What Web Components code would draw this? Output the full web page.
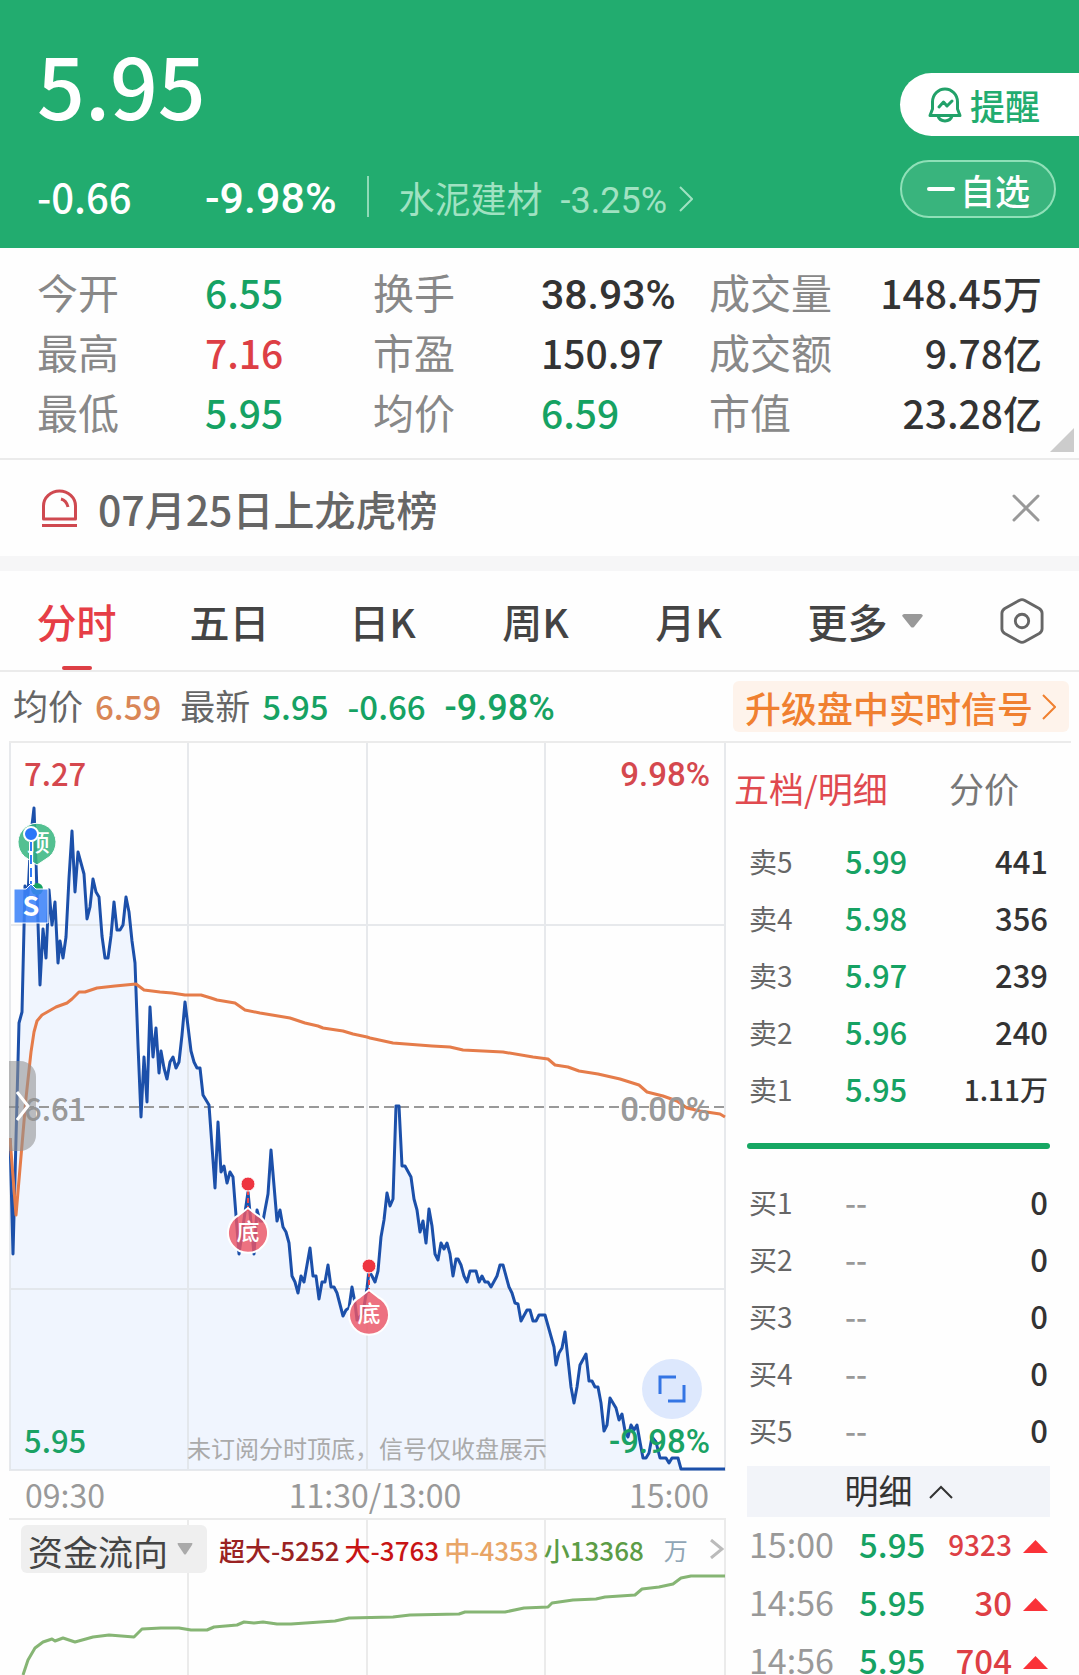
<!DOCTYPE html>
<html lang="zh-CN">
<head>
<meta charset="utf-8">
<meta name="viewport" content="width=device-width, initial-scale=1">
<title>分时行情</title>
<style>
    html, body {
        margin: 0;
        height: 100%;
    }
    body {
        overflow: hidden;
        background: #fefefe;
        color: #333;
        font-family: "Noto Sans CJK SC", "Noto Sans", sans-serif;
        --up: #dd3f45;
        --down: #16a263;
        --line: #ebebeb;
        --muted: #888;
        --pct-font: Roboto, "Noto Sans CJK SC", sans-serif;
    }
</style>
</head>
<body>
<quote-page></quote-page>

<script>
class BaseComponent extends HTMLElement {
    constructor() {
        super();
        this.attachShadow({ mode: 'open' });
        const template = document.createElement('template');
        template.innerHTML = `
        <style>
            * { box-sizing: border-box; }
            button, select {
                margin: 0;
                padding: 0;
                border: 0;
                background: none;
                color: inherit;
                font: inherit;
                appearance: none;
                cursor: pointer;
            }
            svg { display: block; flex: none; fill: none; }
            .up { color: var(--up); }
            .down { color: var(--down); }
            .pct { font-family: var(--pct-font); font-weight: 500; }
        </style>
        ${this.template()}`;
        this.shadowRoot.appendChild(template.content.cloneNode(true));
    }

    template() {
        return '';
    }
}

class QuoteHeader extends BaseComponent {
    template() {
        return `
        <style>
            :host {
                display: flex;
                justify-content: space-between;
                background: #22ac6f;
                color: #fff;
            }
            .left { padding: 34px 0 28px 37px; }
            .price { font-size: 84px; line-height: 100px; font-weight: 500; }
            .row {
                display: flex;
                align-items: baseline;
                height: 48px;
                margin-top: 38px;
                font-size: 40px;
                line-height: 48px;
                font-weight: 500;
            }
            .change { width: 168px; }
            .percent { font-size: 43px; }
            .sector {
                display: flex;
                align-items: baseline;
                gap: 18px;
                margin-left: 30px;
                padding-left: 32px;
                position: relative;
                color: #a0e2c2;
                font-size: 36px;
                font-weight: 400;
                text-decoration: none;
            }
            .sector::before {
                content: "";
                position: absolute;
                left: 0;
                top: 3px;
                width: 2px;
                height: 41px;
                background: #8fdab7;
            }
            .sector .pct { font-weight: 400; }
            .sector svg { margin-left: -6px; align-self: center; }
            .right {
                display: flex;
                flex-direction: column;
                gap: 24px;
                width: 179px;
                padding-top: 73px;
            }
            button { display: flex; align-items: center; }
            .remind {
                height: 63px;
                gap: 8px;
                padding: 0 0 0 28px;
                border-radius: 32px 0 0 32px;
                background: #fff;
                color: #22ac6f;
                font-size: 35px;
                font-weight: 500;
            }
            .fav {
                width: 156px;
                height: 58px;
                gap: 5px;
                padding: 0 0 0 25px;
                border: 2px solid #8fe0b8;
                border-radius: 29px;
                background: #39b47d;
                font-size: 35px;
                font-weight: 500;
            }
        </style>
        <div class="left">
            <div class="price">5.95</div>
            <div class="row">
                <span class="change">-0.66</span>
                <span class="percent pct">-9.98%</span>
                <a class="sector" href="#sector">
                    <span>水泥建材</span>
                    <span class="pct">-3.25%</span>
                    <svg width="14" height="26" viewBox="0 0 14 26" stroke="#a0e2c2" stroke-width="2"><path d="M1 1l12 12L1 25"/></svg>
                </a>
            </div>
        </div>
        <div class="right">
            <button class="remind" type="button">
                <svg width="34" height="36" viewBox="0 0 34 36" stroke="#22a169" stroke-width="3" stroke-linecap="round" stroke-linejoin="round">
                    <path d="M2 28.500l2.500-6.500V15a12.500 13 0 0 1 25 0v7l2.500 6.500z"/>
                    <path d="M10 29c2 6.500 12 6.500 14 0"/>
                    <path d="M11 20l4.500-5 3.500 4 5-5"/>
                </svg>
                <span>提醒</span>
            </button>
            <button class="fav" type="button">
                <svg width="28" height="4" viewBox="0 0 28 4"><path d="M2 2h24" stroke="#fff" stroke-width="4" stroke-linecap="round"/></svg>
                <span>自选</span>
            </button>
        </div>`;
    }
}

class StatGrid extends BaseComponent {
    template() {
        const stats = [
            ['今开', '6.55', 'down'], ['换手', '38.93%', 'pct'], ['成交量', '148.45万', ''],
            ['最高', '7.16', 'up'], ['市盈', '150.97', ''], ['成交额', '9.78亿', ''],
            ['最低', '5.95', 'down'], ['均价', '6.59', 'down'], ['市值', '23.28亿', ''],
        ];
        return `
        <style>
            :host {
                display: block;
                position: relative;
                padding: 13px 37px 17px;
                border-bottom: 2px solid var(--line);
            }
            dl {
                display: grid;
                grid-template-columns: 168fr 168fr 168fr 168fr 126fr 207fr;
                grid-auto-rows: 60px;
                align-items: baseline;
                margin: 0;
                font-size: 41px;
                line-height: 60px;
                white-space: nowrap;
            }
            .item { display: contents; }
            dt { color: var(--muted); }
            dd { margin: 0; font-size: 39px; font-weight: 500; }
            .pct { font-size: 41px; }
            .item:nth-child(3n) dd { text-align: right; }
            .corner { position: absolute; right: 5px; bottom: 6px; }
        </style>
        <dl>
            ${stats.map(([name, value, cls]) => `<div class="item"><dt>${name}</dt><dd class="${cls}">${value}</dd></div>`).join('')}
        </dl>
        <svg class="corner" width="24" height="24" viewBox="0 0 24 24"><path d="M24 0v24H0z" fill="#ccc"/></svg>`;
    }
}

class NoticeBar extends BaseComponent {
    template() {
        return `
        <style>
            :host {
                display: flex;
                align-items: center;
                height: 111px;
                padding: 0 38px 0 41px;
                border-bottom: 15px solid #f6f6f7;
                color: #666;
                font-size: 41px;
                line-height: 60px;
                box-sizing: border-box;
            }
            .text { flex: 1; margin: 0 0 0 20px; font-weight: 500; }
            button { padding: 1px; }
        </style>
        <svg width="37" height="38" viewBox="0 0 37 38" stroke="#cf4950" stroke-width="3">
            <path d="M2.500 30V17a16 15 0 0 1 32 0v13z" stroke-linejoin="round"/>
            <path d="M1 36.500h35"/>
            <path d="M20 10c4 1 6 4 7 8"/>
        </svg>
        <p class="text"><slot></slot></p>
        <button type="button" aria-label="关闭">
            <svg width="28" height="28" viewBox="0 0 28 28" stroke="#999" stroke-width="3" stroke-linecap="round"><path d="M2 2l24 24M26 2L2 26"/></svg>
        </button>`;
    }
}

class PeriodTabs extends BaseComponent {
    template() {
        return `
        <style>
            :host {
                display: grid;
                grid-template-columns: repeat(5, 153fr) 200fr 114fr;
                height: 101px;
                border-bottom: 2px solid var(--line);
                color: #444;
                font-size: 40px;
                font-weight: 500;
                box-sizing: border-box;
            }
            button { display: flex; align-items: center; justify-content: center; position: relative; }
            .active { color: #e63e46; }
            .active::after {
                content: "";
                position: absolute;
                bottom: 0;
                left: 50%;
                width: 30px;
                height: 4px;
                margin-left: -15px;
                border-radius: 2px;
                background: #dd3f45;
            }
            label { display: flex; align-items: center; justify-content: center; gap: 14px; }
            select { height: 60px; }
        </style>
        <button class="active" type="button">分时</button>
        <button type="button">五日</button>
        <button type="button">日K</button>
        <button type="button">周K</button>
        <button type="button">月K</button>
        <label>
            <select aria-label="更多周期"><option>更多</option></select>
            <svg width="21" height="14" viewBox="0 0 21 14"><path d="M2 0h17q3 1 1 3l-8 10q-1.500 1-3 0L1 3q-2-2 1-3z" fill="#999"/></svg>
        </label>
        <button type="button" aria-label="设置">
            <svg width="44" height="48" viewBox="0 0 46 50" stroke="#666" stroke-width="3" stroke-linejoin="round">
                <path d="M20 3.500q3-1.600 6 0l15 8.500q3 2 3 5v16q0 3-3 5l-15 8.500q-3 1.600-6 0L5 38q-3-2-3-5V17q0-3 3-5z"/>
                <circle cx="23" cy="25" r="7"/>
            </svg>
        </button>`;
    }
}

class PriceSummary extends BaseComponent {
    template() {
        return `
        <style>
            :host {
                display: flex;
                align-items: center;
                justify-content: space-between;
                height: 69px;
                padding: 0 10px 0 13px;
                font-size: 33px;
                white-space: nowrap;
                box-sizing: border-box;
            }
            .values { display: flex; align-items: baseline; font-weight: 500; line-height: 50px; }
            .name { margin-right: 12px; color: #666; font-size: 35px; font-weight: 400; }
            .avg { margin-right: 19px; color: #d98656; }
            .down { margin-right: 19px; }
            .pct { font-size: 36px; }
            button {
                display: flex;
                align-items: center;
                gap: 9px;
                height: 51px;
                padding: 0 13px 0 12px;
                border-radius: 6px;
                background: #fef3eb;
                color: #f08030;
                font-size: 36px;
                font-weight: 500;
            }
        </style>
        <div class="values">
            <span class="name">均价</span><span class="avg">6.59</span>
            <span class="name">最新</span><span class="down">5.95</span>
            <span class="down">-0.66</span><span class="down pct">-9.98%</span>
        </div>
        <button type="button">
            <span>升级盘中实时信号</span>
            <svg width="14" height="26" viewBox="0 0 14 26" stroke="#f08030" stroke-width="2"><path d="M1 1l12 12L1 25"/></svg>
        </button>`;
    }
}

// Price line, one point for each minute or two of trading
const PRICE = '10,1138 13,1254 17,1100 19,1023 22,1012 25,886 28,895 31,834 34,808 37,892 40,985 43,929 46,958 49,890 52,925 55,902 58,963 60,941 63,958 66,937 69,878 72,831 75,892 78,852 84,874 87,919 90,907 93,879 96,892 99,897 102,936 105,958 108,958 111,936 114,902 117,930 120,930 123,925 126,897 129,912 132,941 135,963 138,1045 141,1117 144,1057 147,1102 150,1007 153,1057 156,1028 159,1073 161,1051 164,1068 167,1079 170,1062 173,1057 176,1068 179,1062 182,1035 185,1002 191,1051 194,1062 197,1068 200,1068 203,1095 209,1105 215,1188 218,1122 221,1172 224,1166 227,1183 230,1172 233,1177 239,1254 248,1192 254,1254 257,1210 260,1221 263,1221 265,1210 268,1194 271,1150 277,1221 280,1210 283,1227 286,1232 289,1243 292,1276 295,1282 298,1293 301,1276 304,1282 310,1248 313,1276 316,1276 319,1299 322,1282 325,1282 328,1265 331,1287 334,1287 337,1293 343,1316 346,1310 349,1308 352,1287 355,1303 357,1320 363,1313 367,1288 369,1271 372,1276 375,1282 378,1271 381,1237 384,1220 387,1193 390,1206 393,1199 396,1106 399,1106 402,1166 405,1166 411,1177 414,1199 417,1210 420,1232 423,1221 426,1243 429,1209 432,1226 435,1254 438,1260 441,1243 444,1249 447,1243 450,1254 453,1276 456,1259 458,1259 461,1265 464,1276 467,1282 470,1271 476,1271 479,1282 482,1276 485,1282 488,1282 491,1287 497,1276 500,1265 503,1265 509,1287 512,1293 515,1303 518,1304 521,1321 527,1310 530,1310 533,1321 536,1321 539,1315 545,1315 554,1347 556,1365 559,1353 562,1348 565,1332 571,1387 574,1403 577,1387 580,1365 586,1354 589,1381 592,1381 595,1387 598,1387 601,1403 604,1431 607,1425 610,1398 616,1408 619,1420 622,1414 625,1431 628,1437 631,1425 634,1430 637,1425 640,1442 643,1458 646,1458 649,1453 652,1437 656,1442 660,1458 666,1458 669,1463 672,1458 678,1458 681,1469 725,1469';
const AVERAGE = '10,1138 16,1215 26,1098 31,1052 34,1032 37,1021 42,1015 56,1007 67,1003 72,999 79,992 85,992 97,988 115,986 136,984 144,990 160,992 172,993 185,995 201,995 211,998 217,1000 235,1003 245,1010 260,1013 290,1018 305,1023 318,1026 323,1028 343,1031 353,1034 367,1037 370,1038 393,1043 432,1046 450,1047 463,1050 503,1052 533,1057 548,1059 555,1065 568,1067 579,1071 598,1074 620,1079 639,1085 647,1092 663,1096 677,1101 687,1108 700,1111 720,1114 725,1117';
const FLOW = '23,1675 28,1660 35,1648 43,1642 52,1639 55,1641 63,1638 75,1642 93,1637 109,1635 134,1637 142,1629 161,1628 179,1628 191,1630 207,1630 214,1627 237,1625 244,1622 254,1623 263,1622 277,1624 291,1624 335,1621 349,1618 393,1617 410,1615 459,1614 465,1612 505,1612 524,1608 548,1607 552,1603 573,1600 596,1599 605,1597 635,1595 642,1589 659,1587 673,1584 681,1578 691,1576 725,1576';

class MinuteChart extends BaseComponent {
    bottomMark(x, y) {
        return `
        <g>
            <path d="M${x} ${y + 6}v22" stroke="#e8434b" stroke-width="2" stroke-dasharray="5 3"/>
            <circle cx="${x}" cy="${y}" r="7" fill="#ee3540" stroke="#fff" stroke-width="1"/>
            <path d="M${x} ${y + 24}l9 7a20 20 0 1 1 -18 0z" fill="#ec5565" fill-opacity=".82" stroke="#fff" stroke-width="2"/>
            <text class="mark" x="${x}" y="${y + 56}">底</text>
        </g>`;
    }

    template() {
        return `
        <style>
            :host { display: block; position: relative; }
            .chart { width: 100%; height: auto; }
            text { font-size: 31px; font-weight: 500; }
            .pct { font-size: 33px; text-anchor: end; }
            .mark { font-size: 23px; fill: #fff; text-anchor: middle; }
            .s { font-size: 27px; fill: #fff; font-weight: 700; text-anchor: middle; }
            .hint { font-size: 24px; font-weight: 400; fill: #aaa; }
            button { position: absolute; display: flex; align-items: center; justify-content: center; }
            .drawer {
                left: 0;
                top: 318px;
                width: 27px;
                height: 90px;
                border-radius: 0 16px 16px 0;
                background: rgba(145, 145, 145, .58);
            }
            .expand {
                right: 24px;
                bottom: 52px;
                width: 60px;
                height: 60px;
                border-radius: 50%;
                background: #dde8fd;
            }
        </style>
        <svg class="chart" viewBox="9 743 717 728" role="img" aria-label="分时走势">
            <polygon points="10,1470 ${PRICE} 725,1470" fill="#f0f5fe"/>
            <g stroke="#dfe2e6" stroke-opacity=".75" stroke-width="2">
                <path d="M10 743v728M188 743v728M367 743v728M545 743v728M725 743v728M9 925h717M9 1289h717M9 1470h717"/>
            </g>
            <path d="M9 1107h717" stroke="#999" stroke-width="2" stroke-dasharray="10 5"/>
            <polyline points="${PRICE}" stroke="#1c50aa" stroke-width="3" stroke-linejoin="round"/>
            <polyline points="${AVERAGE}" stroke="#e57c4a" stroke-width="3" stroke-linejoin="round"/>

            <circle cx="37" cy="889" r="6" fill="#16a263"/>
            <path d="M33 863v22" stroke="#fff" stroke-width="3"/>
            <path d="M37 865l-9 -6a19 19 0 1 1 18 0z" fill="#35b57e" fill-opacity=".85" stroke="#fff" stroke-width="1"/>
            <text class="mark" x="38" y="851">顶</text>
            <path d="M31 842v42" stroke="#fff" stroke-width="4"/>
            <path d="M31 842v42" stroke="#2f7cf8" stroke-width="2" stroke-dasharray="9 4"/>
            <circle cx="31" cy="834" r="7" fill="#2b76f8" stroke="#fff" stroke-width="2"/>
            <path d="M14 889h12l5-5 5 5h12v34H14z" fill="#3d83f8" fill-opacity=".88" stroke="#fff" stroke-width="1"/>
            <text class="s" x="31" y="916">S</text>
            ${this.bottomMark(248, 1184)}
            ${this.bottomMark(369, 1266)}

            <text x="24" y="786" fill="#d5484e">7.27</text>
            <text class="pct" x="710" y="786" fill="#d5484e">9.98%</text>
            <text x="24" y="1121" fill="#999">6.61</text>
            <text class="pct" x="710" y="1121" fill="#999">0.00%</text>
            <text x="24" y="1453" fill="#1aa264">5.95</text>
            <text class="pct" x="710" y="1453" fill="#1aa264">-9.98%</text>
            <text class="hint" x="187" y="1458">未订阅分时顶底，信号仅收盘展示</text>
        </svg>
        <button class="drawer" type="button" aria-label="展开">
            <svg width="14" height="30" viewBox="0 0 14 30" stroke="#fff" stroke-width="3"><path d="M1 1l11 14L1 29"/></svg>
        </button>
        <button class="expand" type="button" aria-label="全屏">
            <svg width="28" height="28" viewBox="0 0 28 28" stroke="#3475e4" stroke-width="3"><path d="M18 2H2v17M10 26h16V10"/></svg>
        </button>`;
    }
}

class FlowChart extends BaseComponent {
    template() {
        return `
        <style>
            :host { display: block; position: relative; }
            .axis {
                display: grid;
                grid-template-columns: auto 1fr auto;
                height: 49px;
                padding: 0 17px 0 16px;
                border-bottom: 2px solid var(--line);
                color: #999;
                font-size: 32px;
                line-height: 46px;
            }
            .noon { padding-left: 16px; text-align: center; }
            .plot { display: grid; }
            .plot > * { grid-area: 1 / 1; }
            .chart { width: 100%; height: auto; }
            .bar {
                display: flex;
                align-items: center;
                align-self: start;
                height: 48px;
                margin: 5px 2px 0 12px;
                font-size: 26px;
                font-weight: 500;
                white-space: nowrap;
                z-index: 1;
            }
            label {
                display: flex;
                align-items: center;
                gap: 8px;
                height: 48px;
                margin-right: 12px;
                padding: 0 14px 0 7px;
                border-radius: 6px;
                background: #efefef;
                color: #444;
                font-size: 35px;
                font-weight: 400;
            }
            select { height: 48px; padding-bottom: 4px; }
            .legend { display: flex; gap: 5px; }
            .unit { margin-left: 20px; color: #8fa5b5; font-weight: 400; font-size: 24px; }
            .go { margin-left: auto; }
        </style>
        <div class="axis"><span>09:30</span><span class="noon">11:30/13:00</span><span>15:00</span></div>
        <div class="plot">
            <svg class="chart" viewBox="9 1520 717 155" role="img" aria-label="资金流向走势">
                <path d="M188 1520v155M367 1520v155M545 1520v155M725 1520v155" stroke="#ebebeb" stroke-width="2"/>
                <polyline points="${FLOW}" stroke="#86b574" stroke-width="3" stroke-linejoin="round"/>
            </svg>
            <div class="bar">
                <label>
                    <select aria-label="指标"><option>资金流向</option></select>
                    <svg width="16" height="12" viewBox="0 0 16 12"><path d="M1 0h14q1 0 0 2L9 11q-1 1-2 0L1 2q-1-2 0-2z" fill="#aaa"/></svg>
                </label>
                <div class="legend">
                    <span style="color:#9a2222">超大-5252</span>
                    <span style="color:#c81414">大-3763</span>
                    <span style="color:#e8a566">中-4353</span>
                    <span style="color:#5c9c46">小13368</span>
                </div>
                <span class="unit">万</span>
                <button class="go" type="button" aria-label="资金详情">
                    <svg width="14" height="20" viewBox="0 0 14 20" stroke="#bbb" stroke-width="3"><path d="M1 1l11 9L1 19"/></svg>
                </button>
            </div>
        </div>`;
    }
}

class OrderBook extends BaseComponent {
    template() {
        const sells = [['卖5', '5.99', '441'], ['卖4', '5.98', '356'], ['卖3', '5.97', '239'], ['卖2', '5.96', '240'], ['卖1', '5.95', '1.11万']];
        const buys = ['买1', '买2', '买3', '买4', '买5'];
        const ticks = [['15:00', '5.95', '9323'], ['14:56', '5.95', '30'], ['14:56', '5.95', '704']];
        // long volumes are set one size down
        const small = (text, len) => text.length >= len ? 'small' : '';
        return `
        <style>
            :host { display: block; padding: 0 21px; }
            .switch { display: flex; justify-content: space-between; height: 89px; margin: 0 31px 0 -13px; font-size: 35px; }
            .switch button { color: #777; white-space: nowrap; }
            .switch .active { color: #e04a4f; }
            table { width: 100%; border-collapse: collapse; table-layout: fixed; font-size: 31px; font-weight: 500; }
            tr { height: 57px; }
            td, th { padding: 0; line-height: 48px; white-space: nowrap; text-align: left; font-weight: 500; }
            th { width: 98px; padding-left: 2px; color: #666; font-size: 28px; font-weight: 400; }
            td:last-child { padding-right: 2px; text-align: right; }
            .none { color: #999; }
            .ratio { height: 6px; margin: 26px 0 24px; border-radius: 3px; background: #16a763; }
            .detail {
                display: flex;
                align-items: center;
                justify-content: center;
                gap: 16px;
                width: 100%;
                height: 51px;
                margin-top: 8px;
                background: #f2f4f9;
                font-size: 34px;
                line-height: 48px;
            }
            .detail span { padding-bottom: 3px; }
            .small { font-size: 28px; }
            .ticks { font-size: 33px; }
            .ticks td, .ticks th { padding-bottom: 4px; }
            .ticks th { width: 112px; color: #999; font-size: 34px; }
            .ticks .vol { width: 90px; text-align: right; }
            .ticks .arrow { width: 38px; padding-bottom: 10px; }
            .ticks svg { display: inline-block; vertical-align: middle; }
        </style>
        <div class="switch">
            <button class="active" type="button">五档/明细</button>
            <button type="button">分价</button>
        </div>
        <table aria-label="卖盘">
            ${sells.map(([name, price, qty]) => `<tr><th scope="row">${name}</th><td class="down">${price}</td><td class="${small(qty, 5)}">${qty}</td></tr>`).join('')}
        </table>
        <div class="ratio"></div>
        <table aria-label="买盘">
            ${buys.map(name => `<tr><th scope="row">${name}</th><td class="none">--</td><td>0</td></tr>`).join('')}
        </table>
        <button class="detail" type="button">
            <span>明细</span>
            <svg width="24" height="14" viewBox="0 0 24 14" stroke="#333" stroke-width="2"><path d="M1 13L12 2l11 11"/></svg>
        </button>
        <table class="ticks" aria-label="成交明细">
            ${ticks.map(([time, price, vol]) => `<tr><th scope="row">${time}</th><td class="down">${price}</td><td class="vol up ${small(vol, 4)}">${vol}</td><td class="arrow"><svg width="25" height="13" viewBox="0 0 25 13"><path d="M12.500 0L25 13H0z" fill="#fa3238"/></svg></td></tr>`).join('')}
        </table>`;
    }
}

class QuotePage extends BaseComponent {
    template() {
        return `
        <style>
            :host { display: block; }
            main {
                display: grid;
                grid-template-columns: 717fr 345fr;
                margin: 0 8px 0 9px;
                border-top: 2px solid var(--line);
            }
            main > * { min-width: 0; }
        </style>
        <quote-header></quote-header>
        <stat-grid></stat-grid>
        <notice-bar>07月25日上龙虎榜</notice-bar>
        <period-tabs></period-tabs>
        <price-summary></price-summary>
        <main>
            <section>
                <minute-chart></minute-chart>
                <flow-chart></flow-chart>
            </section>
            <order-book></order-book>
        </main>`;
    }
}

customElements.define('quote-header', QuoteHeader);
customElements.define('stat-grid', StatGrid);
customElements.define('notice-bar', NoticeBar);
customElements.define('period-tabs', PeriodTabs);
customElements.define('price-summary', PriceSummary);
customElements.define('minute-chart', MinuteChart);
customElements.define('flow-chart', FlowChart);
customElements.define('order-book', OrderBook);
customElements.define('quote-page', QuotePage);
</script>
</body>
</html>
